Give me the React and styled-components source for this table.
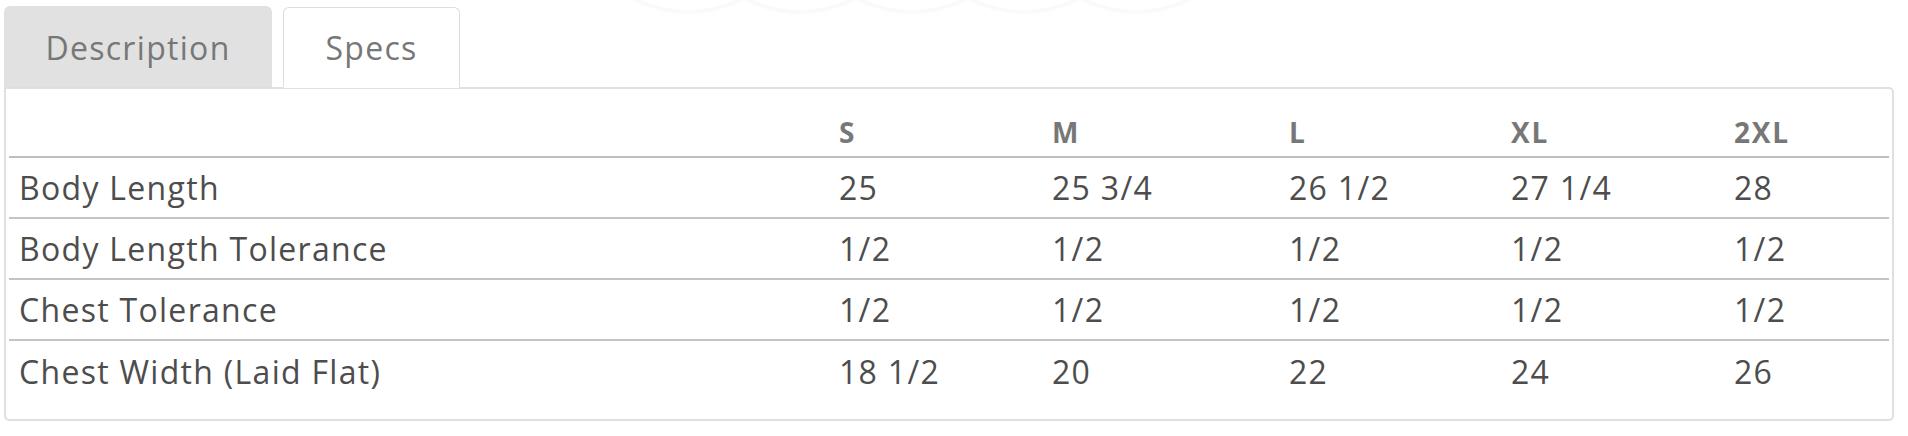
import React from 'react';
import styled, { createGlobalStyle } from 'styled-components';

const GlobalStyle = createGlobalStyle`
  html, body { margin: 0; padding: 0; background: #fff; }
  body { font-family: "Open Sans", "DejaVu Sans", sans-serif; }
`;

const Page = styled.div`
  position: relative;
  width: 1908px;
  height: 436px;
  box-sizing: border-box;
  padding: 6px 14px 0 4px;
  overflow: hidden;
`;

const Scallops = styled.svg`
  position: absolute;
  left: 620px;
  top: -6px;
  pointer-events: none;
`;

const TabList = styled.div`
  display: flex;
  gap: 11px;
  position: relative;
  z-index: 1;
  margin-bottom: -1px;
`;

const Tab = styled.div`
  box-sizing: border-box;
  width: ${({ w }) => w}px;
  display: flex;
  align-items: center;
  justify-content: center;
  font-size: 32px;
  letter-spacing: 1.3px;
  color: #777;
  border-radius: 6px 6px 0 0;
  background: ${({ active }) => (active ? '#fff' : '#e1e1e1')};
  border: 1px solid ${({ active }) => (active ? '#ddd' : '#e1e1e1')};
  border-bottom: 1px solid ${({ active }) => (active ? '#fff' : '#ddd')};
  margin-top: ${({ active }) => (active ? '1px' : '0')};
  height: ${({ active }) => (active ? '81px' : '82px')};
`;

const Panel = styled.div`
  box-sizing: border-box;
  height: 334px;
  border: 2px solid #e0e0e0;
  border-radius: 0 5px 5px 5px;
  padding: 8px 3px 0 3px;
`;

const cols = '819px 213px 237px 222px 223px 1fr';

const HeadRow = styled.div`
  display: grid;
  grid-template-columns: ${cols};
  height: 61px;
  align-items: center;
  border-bottom: 2px solid #bdbdbd;
  box-sizing: border-box;
`;

const HeadCell = styled.div`
  padding-left: 11px;
  font-size: 28px;
  font-weight: 700;
  letter-spacing: 1.8px;
  color: #777;
  padding-top: 10px;
`;

const Row = styled.div`
  display: grid;
  grid-template-columns: ${cols};
  height: 61px;
  align-items: center;
  box-sizing: border-box;
  border-bottom: ${({ last }) => (last ? 'none' : '2px solid #c4c4c4')};
`;

const Cell = styled.div`
  padding-left: ${({ first }) => (first ? '10px' : '11px')};
  font-size: 32px;
  letter-spacing: 1.3px;
  color: #4d4d4d;
  white-space: nowrap;
`;

const sizes = ['S', 'M', 'L', 'XL', '2XL'];

const rows = [
  { label: 'Body Length', values: ['25', '25 3/4', '26 1/2', '27 1/4', '28'] },
  { label: 'Body Length Tolerance', values: ['1/2', '1/2', '1/2', '1/2', '1/2'] },
  { label: 'Chest Tolerance', values: ['1/2', '1/2', '1/2', '1/2', '1/2'] },
  { label: 'Chest Width (Laid Flat)', values: ['18 1/2', '20', '22', '24', '26'] },
];

export default function App() {
  return (
    <>
      <GlobalStyle />
      <Page>
        <Scallops width="580" height="30" viewBox="0 0 580 30">
          {[0, 1, 2, 3, 4].map((i) => (
            <path
              key={i}
              d={`M${12 + i * 112} 4 Q${68 + i * 112} 32 ${124 + i * 112} 4`}
              fill="none"
              stroke="#fafafa"
              strokeWidth="4"
            />
          ))}
        </Scallops>
        <TabList>
          <Tab w={268}>Description</Tab>
          <Tab w={177} active>Specs</Tab>
        </TabList>
        <Panel>
          <HeadRow>
            <HeadCell />
            {sizes.map((s) => (
              <HeadCell key={s}>{s}</HeadCell>
            ))}
          </HeadRow>
          {rows.map((r, i) => (
            <Row key={r.label} last={i === rows.length - 1}>
              <Cell first>{r.label}</Cell>
              {r.values.map((v, j) => (
                <Cell key={j}>{v}</Cell>
              ))}
            </Row>
          ))}
        </Panel>
      </Page>
    </>
  );
}
